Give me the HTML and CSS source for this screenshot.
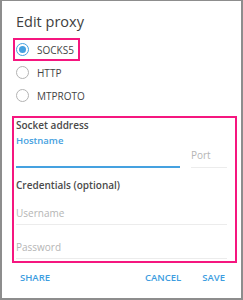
FILE: index.html
```html
<!DOCTYPE html>
<html>
<head>
  <title>Edit proxy</title>
  <meta charset="UTF-8"/>
  <link rel="stylesheet" href="styles.css">
</head>
<body>
<div class="dialog">
  <h1 class="title">Edit proxy</h1>

  <div class="types">
    <label class="radio marked">
      <span class="circle checked"></span>
      <span class="radio-text">SOCKS5</span>
    </label>
    <label class="radio">
      <span class="circle"></span>
      <span class="radio-text">HTTP</span>
    </label>
    <label class="radio">
      <span class="circle"></span>
      <span class="radio-text">MTPROTO</span>
    </label>
  </div>

  <div class="settings marked">
    <h2 class="section">Socket address</h2>
    <div class="field-row">
      <div class="field host">
        <span class="field-label">Hostname</span>
        <input class="field-input active" type="text"/>
      </div>
      <div class="field port">
        <input class="field-input" type="text" placeholder="Port"/>
      </div>
    </div>

    <h2 class="section credentials">Credentials (optional)</h2>
    <input class="field-input plain user" type="text" placeholder="Username"/>
    <input class="field-input plain pass" type="password" placeholder="Password"/>
  </div>

  <div class="actions">
    <button class="link-btn">Share</button>
    <span class="spacer"></span>
    <button class="link-btn">Cancel</button>
    <button class="link-btn save">Save</button>
  </div>
</div>
</body>
</html>
```

FILE: styles.css
```css
* {
  box-sizing: border-box;
}

body {
  margin: 0;
  font-family: "Open Sans", "Noto Sans", sans-serif;
  background: #fff;
}

/* dialog frame */
.dialog {
  width: 243px;
  height: 300px;
  border: 2px solid #8d8d8d;
  border-top-width: 1px;
  padding: 0 4px 0 14px;
  display: flex;
  flex-direction: column;
}

.title {
  margin: 11px 0 0 0;
  font-size: 14.5px;
  line-height: 19px;
  font-weight: 500;
  color: #404040;
}

/* proxy type */
.types {
  margin-top: 7px;
  margin-left: -3px;
  display: flex;
  flex-direction: column;
  align-items: flex-start;
}

.radio {
  height: 23px;
  display: flex;
  align-items: center;
  border: 2px solid transparent;
  padding-right: 4px;
}

.marked {
  border: 2px solid #f5167f;
}

.circle {
  width: 13px;
  height: 13px;
  margin-left: 1px;
  border: 1.5px solid #b3b3b3;
  border-radius: 50%;
  display: flex;
  align-items: center;
  justify-content: center;
}

.circle.checked {
  border-color: #45a1e0;
}

.circle.checked::after {
  content: "";
  width: 7px;
  height: 7px;
  border-radius: 50%;
  background: #45a1e0;
}

.radio-text {
  margin-left: 8px;
  font-size: 10px;
  color: #444;
}

/* address and credentials */
.settings {
  margin: 9px 0 0 -4px;
  padding: 0 8px 2px 2px;
  display: flex;
  flex-direction: column;
}

.section {
  margin: 0;
  font-size: 10px;
  line-height: 14px;
  font-weight: 600;
  color: #4a4a4a;
}

.field-row {
  display: flex;
  align-items: flex-end;
  gap: 11px;
  margin-top: 3px;
}

.field {
  display: flex;
  flex-direction: column;
}

.host {
  flex-grow: 1;
}

.port {
  width: 36px;
}

.field-label {
  font-size: 9.5px;
  line-height: 12px;
  font-weight: 600;
  color: #45a1e0;
}

.field-input {
  width: 100%;
  height: 20px;
  border: none;
  border-bottom: 1px solid #ececec;
  padding: 0;
  outline: none;
  font-family: inherit;
  font-size: 10px;
  color: #444;
  background: transparent;
}

.port .field-input {
  padding-bottom: 5px;
}

.field-input.active {
  height: 21px;
  border-bottom: 2px solid #45a1e0;
}

.field-input::placeholder {
  color: #b5b5b5;
}

.credentials {
  margin-top: 10px;
}

.plain {
  height: 23px;
}

.user {
  margin-top: 10px;
}

.pass {
  margin-top: 11px;
}

/* buttons */
.actions {
  margin-top: 8px;
  display: flex;
  align-items: center;
  padding-left: 4px;
}

.spacer {
  flex-grow: 1;
}

.link-btn {
  border: none;
  background: none;
  padding: 0;
  font-family: inherit;
  font-size: 9.5px;
  line-height: 14px;
  font-weight: 600;
  color: #3d9de0;
  text-transform: uppercase;
  cursor: pointer;
}

.save {
  margin-left: 21px;
  margin-right: 12px;
}
```
